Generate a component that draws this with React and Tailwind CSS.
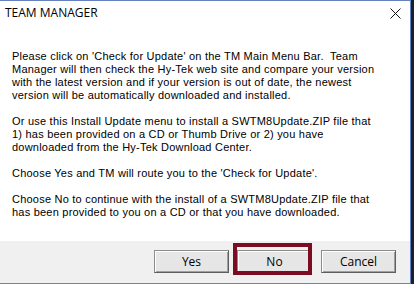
const paragraphs = [
  [
    "Please click on 'Check for Update' on the TM Main Menu Bar.  Team",
    "Manager will then check the Hy-Tek web site and compare your version",
    "with the latest version and if your version is out of date, the newest",
    "version will be automatically downloaded and installed.",
  ],
  [
    "Or use this Install Update menu to install a SWTM8Update.ZIP file that",
    "1) has been provided on a CD or Thumb Drive or 2) you have",
    "downloaded from the Hy-Tek Download Center.",
  ],
  ["Choose Yes and TM will route you to the 'Check for Update'."],
  [
    "Choose No to continue with the install of a SWTM8Update.ZIP file that",
    "has been provided to you on a CD or that you have downloaded.",
  ],
];

function DlgButton({ label }) {
  return (
    <button
      className="flex h-[23px] w-[75px] items-center justify-center border border-[#8c8c8c] border-b-[#5e5e5e] border-r-[#5e5e5e] bg-[#e6e6e6] text-[12px] text-black shadow-[inset_1px_1px_0_#ffffff,inset_-1px_-1px_0_#a0a0a0]"
      style={{ fontFamily: "'Open Sans', 'Noto Sans', sans-serif" }}
    >
      {label}
    </button>
  );
}

export default function App() {
  return (
    <div
      className="flex h-[284px] w-[414px] bg-[#1a2032]"
      style={{ fontFamily: "'Liberation Sans', Arial, sans-serif" }}
    >
      <div className="flex h-[284px] w-[411px] flex-col border-b border-r border-t border-[#6581bf] bg-white">
        <div className="flex h-[24px] items-center justify-between pl-[5px] pr-[9px]">
          <span
            className="text-[12px] text-black"
            style={{ fontFamily: "'Open Sans', 'Noto Sans', sans-serif" }}
          >
            TEAM MANAGER
          </span>
          <svg width="11" height="11" viewBox="0 0 11 11">
            <path d="M0.5 0.5 L10.5 10.5 M10.5 0.5 L0.5 10.5" stroke="#111" strokeWidth="1" />
          </svg>
        </div>

        <div className="flex flex-1 flex-col gap-[13px] pl-[12px] pt-[25px] text-[11px] leading-[13px] tracking-[0.22px] text-black">
          {paragraphs.map((lines, i) => (
            <p key={i}>
              {lines.map((line, j) => (
                <span key={j} className="block whitespace-pre">
                  {line}
                </span>
              ))}
            </p>
          ))}
        </div>

        <div className="flex h-[42px] items-start justify-end bg-[#f0f0f0] pr-[14px] pt-[9px]">
          <DlgButton label="Yes" />
          <div className="relative ml-[8px]">
            <DlgButton label="No" />
            <span className="absolute bottom-[-2px] left-[-4px] right-0 top-[-7px] border-4 border-[#7b0c22]" />
          </div>
          <div className="ml-[9px]">
            <DlgButton label="Cancel" />
          </div>
        </div>
      </div>
    </div>
  );
}
